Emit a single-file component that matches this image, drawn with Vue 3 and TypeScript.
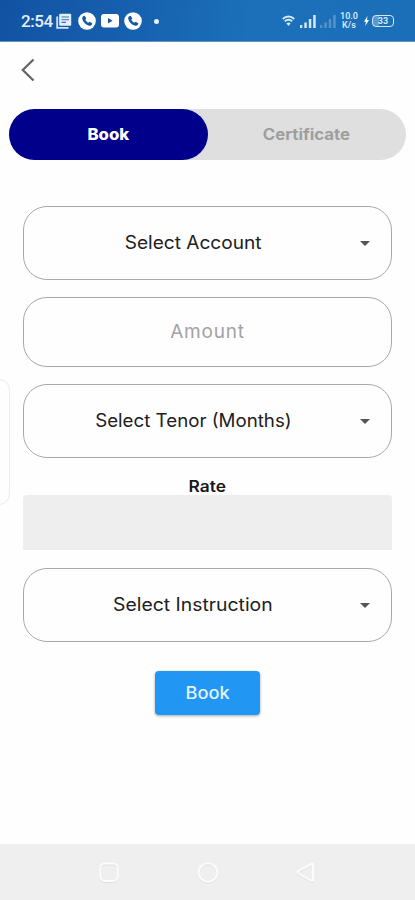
<script setup lang="ts">
import { ref } from 'vue'

type Tab = 'Book' | 'Certificate'
const tabs: Tab[] = ['Book', 'Certificate']
const active = ref<Tab>('Book')
const amount = ref('')
</script>

<template>
  <div class="screen">
    <header class="status">
      <div class="status-left">
        <span class="time">2:54</span>
        <svg class="news" width="16" height="16" viewBox="0 0 16 16">
          <path d="M1.2 3.5v11.3h11.3" fill="none" stroke="#d5e3f3" stroke-width="1.8" />
          <rect x="3.2" y="0.8" width="12" height="12" rx="1" fill="#e4eef9" />
          <path d="M5.5 4h7.5M5.5 6.7h7.5M5.5 9.4h4.5" stroke="#3a72b8" stroke-width="1.1" />
        </svg>
        <svg class="phone" width="18" height="18" viewBox="0 0 18 18">
          <circle cx="9" cy="9" r="8.8" fill="#fff" />
          <path d="M5.2 4.2l1.5-.5 1.6 2.8-1 1.2c.7 1.4 1.7 2.3 3 3l1.2-1 2.8 1.6-.5 1.5c-.6.9-1.6 1.2-2.7.9C7.600 12.700 5.300 10.400 4.300 6.900c-.3-1.100 0-2.100.9-2.700z" fill="#1557a5" />
        </svg>
        <svg class="tube" width="18" height="14" viewBox="0 0 18 14">
          <rect width="18" height="13.500" rx="3" fill="#fff" />
          <path d="M7 4v5.500l4.600-2.750z" fill="#1557a5" />
        </svg>
        <svg class="phone" width="18" height="18" viewBox="0 0 18 18">
          <circle cx="9" cy="9" r="8.8" fill="#fff" />
          <path d="M5.2 4.2l1.5-.5 1.6 2.8-1 1.2c.7 1.4 1.7 2.3 3 3l1.2-1 2.8 1.6-.5 1.5c-.6.9-1.6 1.2-2.7.9C7.600 12.700 5.300 10.400 4.300 6.900c-.3-1.100 0-2.100.9-2.700z" fill="#1557a5" />
        </svg>
        <i class="dot"></i>
      </div>
      <div class="status-right">
        <svg width="13" height="12" viewBox="0 0 13 12" fill="none" stroke="#d5e8f8" stroke-width="1.9">
          <path d="M.8 4C4 .6 9 .6 12.200 4M2.800 6.400c2.200-2.200 5.200-2.200 7.400 0" />
          <path d="M4.300 8.300c1.300-1.200 3.100-1.200 4.400 0L6.500 11z" fill="#d5e8f8" stroke="none" />
        </svg>
        <svg class="signal" width="16" height="13" viewBox="0 0 16 13" fill="#d5e8f8">
          <path d="M0 10h2.300v3H0zM4.300 7.500h2.500V13H4.300zM8.800 4h2.500v9H8.800zM13.200 0h2.500v13h-2.500z" />
        </svg>
        <svg class="signal faint" width="16" height="13" viewBox="0 0 16 13" fill="#d5e8f8">
          <path d="M0 10h2.300v3H0zM4.300 7.500h2.500V13H4.300zM8.800 4h2.500v9H8.800zM13.200 0h2.500v13h-2.500z" />
        </svg>
        <span class="speed"><span>10.0</span><span>K/s</span></span>
        <svg class="bolt" width="5" height="10" viewBox="0 0 5 10"><path d="M3.500 0L0 5.800h2L1.200 10 5 4H3z" fill="#fff" /></svg>
        <span class="battery"><i></i><b>33</b></span>
      </div>
    </header>

    <nav class="topbar">
      <button class="back" aria-label="Back">
        <svg width="14" height="24" viewBox="0 0 14 24"><path d="M12.500 1.500L1.800 12l10.700 10.500" fill="none" stroke="#666" stroke-width="2.300" /></svg>
      </button>
    </nav>

    <div class="tabs">
      <button v-for="t in tabs" :key="t" class="tab" :class="{ active: active === t }" @click="active = t">
        <span :class="t === 'Book' ? 'tab-book' : 'tab-cert'">{{ t }}</span>
      </button>
    </div>

    <main class="form">
      <button class="field select"><span class="label account">Select Account</span><i class="caret"></i></button>
      <input v-model="amount" class="field amount" placeholder="Amount" />
      <button class="field select"><span class="label tenor">Select Tenor (Months)</span><i class="caret"></i></button>
      <div class="rate-label"><span>Rate</span></div>
      <div class="rate-box"></div>
      <button class="field select"><span class="label instruction">Select Instruction</span><i class="caret"></i></button>
      <button class="submit"><span>Book</span></button>
    </main>

    <div class="edge-handle"></div>

    <footer class="navbar">
      <svg width="22" height="24" viewBox="0 0 22 24"><rect x="2.300" y="4.500" width="17.400" height="17.400" rx="4.500" class="shade" /><rect x="2.300" y="3.500" width="17.400" height="17.400" rx="4.500" class="line" /></svg>
      <svg width="22" height="24" viewBox="0 0 22 24"><circle cx="11" cy="13.500" r="9.300" class="shade" /><circle cx="11" cy="12.500" r="9.300" class="line" /></svg>
      <svg width="22" height="24" viewBox="0 0 22 24"><path d="M18 5v16.500q-1 .5-2 0L3 14q-1-1 0-2L16.500 5q1-.5 1.500 0z" class="shade" /><path d="M18 4v16.500q-1 .5-2 0L3 13q-1-1 0-2L16.500 4q1-.5 1.500 0z" class="line" /></svg>
    </footer>
  </div>
</template>

<style>
body { background: #fefefe; }
</style>

<style scoped>
.screen {
  position: relative;
  display: flex;
  flex-direction: column;
  width: 415px;
  height: 900px;
  overflow: hidden;
  background: #fefefe;
  font-family: Inter, "Open Sans", sans-serif;
}
button, input { font: inherit; margin: 0; padding: 0; border: 0; background: none; outline: none; box-sizing: border-box; }
.status {
  display: flex;
  justify-content: space-between;
  height: 42px;
  box-sizing: border-box;
  padding: 1px 21px 0;
  background: linear-gradient(100deg, #1252a3 0%, #1762b0 35%, #1b70b9 60%, #1b6fb8 100%);
  border-bottom: 1px solid #5f94c9;
}
.status-left, .status-right { display: flex; align-items: center; }
.time { width: 32px; font: 500 17px Roboto, sans-serif; color: #e6f0fa; letter-spacing: -0.4px; }
.news { margin-left: 3px; }
.phone { margin-left: 6px; }
.tube { margin-left: 5px; }
.tube + .phone { margin-left: 5px; }
.dot { width: 5px; height: 5px; margin-left: 12px; border-radius: 50%; background: #e8f2fb; }
.signal { margin-left: 5px; }
.signal.faint { margin-left: 4px; opacity: .3; }
.speed { display: flex; flex-direction: column; align-items: center; width: 18px; margin-left: 4px; font: 600 9px/9px Roboto, sans-serif; color: #d5e8f8; }
.bolt { margin-left: 6px; }
.battery { display: flex; position: relative; width: 22px; height: 12px; margin-left: 3px; box-sizing: border-box; border: 1.500px solid #d5e8f8; border-radius: 4px; align-items: center; justify-content: center; }
.battery i { position: absolute; left: 0; top: 0; bottom: 0; width: 6px; background: #d5e8f8; opacity: .35; }
.battery b { font: 700 9px/9px Roboto, sans-serif; color: #d5e8f8; }
.topbar { display: flex; align-items: center; height: 67px; padding: 0 21px; box-sizing: border-box; padding-bottom: 12px; }
.back { display: flex; }
.tabs { display: flex; height: 51px; margin: 0 9px; border-radius: 26px; background: #dfdfdf; }
.tab { display: flex; flex: 1; align-items: center; justify-content: center; border-radius: 26px; padding-bottom: 1px; font-weight: 700; font-size: 15.500px; color: #9e9e9e; }
.tab.active { background: #00008b; color: #fff; }
.tab-book { font-weight: 800; transform: scaleX(1.08); }
.tab-cert { transform: scaleX(1.08); }
.form { display: flex; flex: 1; flex-direction: column; align-items: stretch; padding: 46px 23px 0; }
.field { width: 100%; border: 1px solid #a9a9a9; border-radius: 24px; }
.select { display: flex; flex: none; align-items: center; height: 74px; padding: 0 21px 2px 24px; color: #202020; font-size: 18px; }
.label { flex: 1; margin-right: -22px; padding-right: 30px; text-align: center; white-space: nowrap; }
.account { transform: scaleX(1.06); }
.tenor { transform: scaleX(1.04); }
.instruction { transform: scaleX(1.075); }
.caret { width: 0; height: 0; margin-left: 12px; border: 5.500px solid transparent; border-top-color: #555; border-bottom: 0; margin-top: 2px; }
.amount { flex: none; height: 70px; margin: 17px 0; padding-bottom: 2px; text-align: center; font-size: 19px; color: #222; }
.amount::placeholder { color: #a3a3a3; opacity: 1; letter-spacing: 0.800px; }
.rate-label { display: flex; justify-content: center; align-items: center; height: 37px; padding-top: 18px; box-sizing: border-box; font-weight: 600; font-size: 16px; color: #181818; }
.rate-label span { transform: scaleX(1.08); }
.rate-box { flex: none; height: 55px; margin-bottom: 18px; border-radius: 4px 4px 0 0; background: #eee; }
.submit { display: flex; align-items: center; justify-content: center; align-self: center; width: 105px; height: 44px; margin-top: 29px; border-radius: 4px; background: #2196f3; color: #e6f4ff; font-weight: 500; font-size: 17px; box-shadow: 0 1px 3px rgba(0, 0, 0, .35); }
.submit span { transform: scaleX(1.07); }
.edge-handle { position: absolute; left: -12px; top: 379px; width: 20px; height: 124px; border: 1px solid #ebebeb; border-radius: 12px; }
.navbar { display: flex; justify-content: space-between; align-items: center; height: 56px; box-sizing: border-box; padding: 0 98px; background: #efefef; }
.navbar svg { fill: none; stroke-width: 2; }
.shade { stroke: #e0e0e0; }
.line { stroke: #fcfcfc; }
</style>
